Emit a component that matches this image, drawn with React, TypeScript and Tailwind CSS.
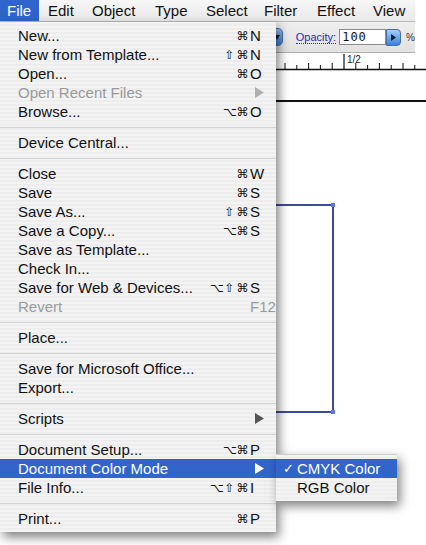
import React from "react";

type Item =
  | { sep: true }
  | {
      sep?: false;
      label: string;
      mods?: string[];
      key?: string;
      disabled?: boolean;
      arrow?: boolean;
      active?: boolean;
    };

const items: Item[] = [
  { label: "New...", mods: ["⌘"], key: "N" },
  { label: "New from Template...", mods: ["⇧", "⌘"], key: "N" },
  { label: "Open...", mods: ["⌘"], key: "O" },
  { label: "Open Recent Files", disabled: true, arrow: true },
  { label: "Browse...", mods: ["⌥", "⌘"], key: "O" },
  { sep: true },
  { label: "Device Central..." },
  { sep: true },
  { label: "Close", mods: ["⌘"], key: "W" },
  { label: "Save", mods: ["⌘"], key: "S" },
  { label: "Save As...", mods: ["⇧", "⌘"], key: "S" },
  { label: "Save a Copy...", mods: ["⌥", "⌘"], key: "S" },
  { label: "Save as Template..." },
  { label: "Check In..." },
  { label: "Save for Web & Devices...", mods: ["⌥", "⇧", "⌘"], key: "S" },
  { label: "Revert", key: "F12", disabled: true },
  { sep: true },
  { label: "Place..." },
  { sep: true },
  { label: "Save for Microsoft Office..." },
  { label: "Export..." },
  { sep: true },
  { label: "Scripts", arrow: true },
  { sep: true },
  { label: "Document Setup...", mods: ["⌥", "⌘"], key: "P" },
  { label: "Document Color Mode", arrow: true, active: true },
  { label: "File Info...", mods: ["⌥", "⇧", "⌘"], key: "I" },
  { sep: true },
  { label: "Print...", mods: ["⌘"], key: "P" },
];

function Arrow({ color }: { color: string }) {
  return (
    <svg width="9" height="11" viewBox="0 0 9 11">
      <path d="M0 0 L9 5.5 L0 11 Z" fill={color} />
    </svg>
  );
}

function Ruler() {
  const ticks: React.ReactNode[] = [];
  for (let i = 0; i < 13; i++) {
    const x = 9 + i * 11.8;
    const major = i === 5;
    const mid = i % 2 === 0;
    const h = major ? 15 : mid ? 6 : 4;
    ticks.push(
      <line key={i} x1={x} x2={x} y1={16 - h} y2={16} stroke="#111" strokeWidth={major ? 1.2 : 1} />
    );
  }
  return (
    <svg width="150" height="18" viewBox="0 0 150 18" className="block">
      {ticks}
      <line x1="0" x2="150" y1="16.5" y2="16.5" stroke="#111" strokeWidth="1.5" />
      <text x="71" y="10" fontSize="10" fontFamily="Liberation Sans, sans-serif" fill="#222">
        1/2
      </text>
    </svg>
  );
}

const stripes =
  "bg-[repeating-linear-gradient(0deg,#f3f3f3_0px,#f3f3f3_2px,#ededed_2px,#ededed_4px)]";

export default function App() {
  return (
    <div
      className="relative w-[426px] h-[545px] bg-white overflow-hidden text-[#111]"
      style={{ fontFamily: '"Liberation Sans", "DejaVu Sans", Arial, sans-serif' }}
    >
      {/* Menu bar */}
      <div className="flex h-[22px] w-[415px] items-center bg-gradient-to-b from-[#f7f7f7] to-[#e9e9e9] border-b border-[#b9b9b9] text-[15px] leading-none">
        <div className="h-full flex items-center pl-[7px] w-[39px] bg-[#2f64cc] text-white">File</div>
        <span className="ml-[9px] w-[44px]">Edit</span>
        <span className="w-[63px]">Object</span>
        <span className="w-[51px]">Type</span>
        <span className="w-[58px]">Select</span>
        <span className="w-[53px]">Filter</span>
        <span className="w-[56px]">Effect</span>
        <span>View</span>
      </div>

      {/* Toolbar */}
      <div className="flex h-[31px] w-[415px] items-center bg-gradient-to-b from-[#eeeeee] to-[#e2e2e2] border-b border-[#b0b0b0]">
        <div className="w-[268px] shrink-0" />
        <div className="w-[15px] h-[18px] rounded-[5px] bg-gradient-to-b from-[#9cc3f2] to-[#3a7ed8] border border-[#4a6fa8] flex items-center justify-end pr-[2px]">
          <svg width="6" height="5" viewBox="0 0 6 5">
            <path d="M0 0 L6 0 L3 5 Z" fill="#123" />
          </svg>
        </div>
        <span className="ml-[13px] text-[11px] text-[#2a2ab0] border-b border-dotted border-[#2a2ab0] leading-[12px]">
          Opacity:
        </span>
        <div
          className="ml-[3px] w-[48px] h-[16px] bg-white border border-[#8a8a8a] text-[12px] leading-[14px] pl-[2px] tracking-[1px]"
          style={{ fontFamily: '"DejaVu Sans Mono", monospace' }}
        >
          100
        </div>
        <div className="w-[15px] h-[17px] rounded-r-[4px] bg-gradient-to-b from-[#a6cdf6] to-[#3a82dc] border border-[#4a6fa8] flex items-center justify-center">
          <svg width="5" height="7" viewBox="0 0 5 7">
            <path d="M0 0 L5 3.5 L0 7 Z" fill="#123" />
          </svg>
        </div>
        <span className="ml-[5px] text-[10px] text-[#333]">%</span>
      </div>

      {/* Ruler */}
      <div className="flex">
        <div className="w-[276px] shrink-0" />
        <Ruler />
      </div>

      {/* Canvas */}
      <div className="relative h-[474px] pt-[29px]">
        <div className="h-[1.5px] bg-[#111] ml-[276px]" />
        {/* artwork rectangle */}
        <div className="absolute left-[200px] top-[133px] w-[134px] h-[209px] border-[2px] border-[#3d4a9c]" />
        <div className="absolute left-[331px] top-[132px] w-[4px] h-[4px] bg-[#5b78dc]" />
        <div className="absolute left-[331px] top-[339px] w-[4px] h-[4px] bg-[#5b78dc]" />
      </div>

      {/* File menu */}
      <div
        className={`absolute left-0 top-[22px] w-[276px] pt-[4px] pb-[4px] ${stripes} shadow-[3px_5px_10px_rgba(0,0,0,0.5)] text-[15px] leading-none`}
      >
        {items.map((it, i) => {
          if (it.sep) {
            return (
              <div key={i} className="h-[12px] flex items-center">
                <div className="h-px w-full bg-[#d4d4d4]" />
              </div>
            );
          }
          const textColor = it.active ? "text-white" : it.disabled ? "text-[#9a9a9a]" : "text-[#111]";
          return (
            <div
              key={i}
              className={`h-[19px] flex items-center ${it.active ? "bg-[#3264c9]" : ""} ${textColor}`}
            >
              <span className="flex-1 pl-[18px] whitespace-nowrap">{it.label}</span>
              <span className="flex justify-end">
                {(it.mods || []).map((m, j) => (
                  <span
                    key={j}
                    className="w-[13px] text-center text-[12px]"
                    style={{ fontFamily: '"DejaVu Sans", sans-serif' }}
                  >
                    {m}
                  </span>
                ))}
              </span>
              <span className="w-[27px] pl-[1px] flex items-center">
                {it.arrow ? (
                  <span className="ml-[5px]">
                    <Arrow color={it.active ? "#ffffff" : it.disabled ? "#b0b0b0" : "#555"} />
                  </span>
                ) : (
                  it.key
                )}
              </span>
            </div>
          );
        })}
      </div>

      {/* Submenu */}
      <div
        className={`absolute left-[276px] top-[454px] w-[121px] pt-[4px] pb-[4px] ${stripes} shadow-[3px_5px_10px_rgba(0,0,0,0.5)] text-[15px] leading-none border-t border-[#d0d0d0]`}
      >
        <div className="h-[19px] flex items-center bg-[#3264c9] text-white">
          <span className="w-[21px] pl-[7px] text-[13px]" style={{ fontFamily: '"DejaVu Sans", sans-serif' }}>
            ✓
          </span>
          <span>CMYK Color</span>
        </div>
        <div className="h-[19px] flex items-center text-[#111]">
          <span className="w-[21px]" />
          <span>RGB Color</span>
        </div>
      </div>
    </div>
  );
}
